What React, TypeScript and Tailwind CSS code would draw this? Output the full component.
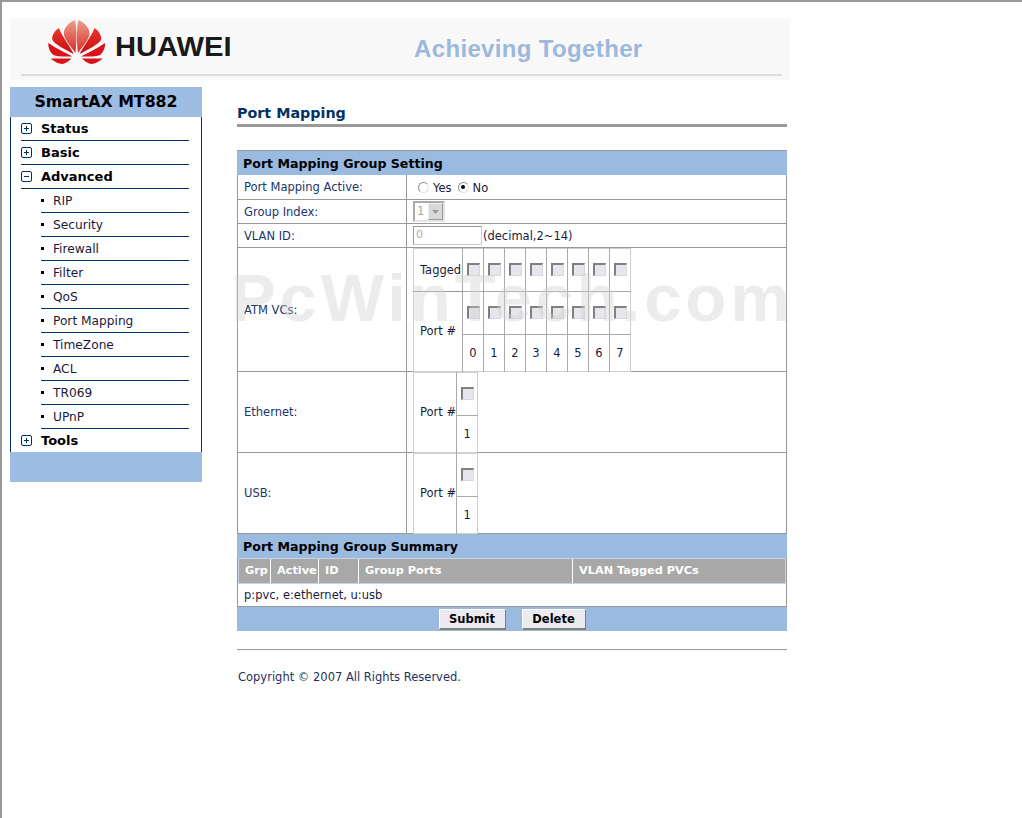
const nav = "font-['DejaVu_Sans',sans-serif]"

const subItems = ['RIP', 'Security', 'Firewall', 'Filter', 'QoS', 'Port Mapping', 'TimeZone', 'ACL', 'TR069', 'UPnP']
const ports = [0, 1, 2, 3, 4, 5, 6, 7]

function Petal({ d, fill }: { d: string; fill: string }) {
  return (
    <g fill={fill}>
      <path d={d} />
      <path d={d} transform="matrix(-1 0 0 1 73.4 0)" />
    </g>
  )
}

function Logo() {
  return (
    <svg viewBox="5 3 62 47" className="w-[62px] h-[47px] shrink-0">
      <defs>
        <linearGradient id="petalTop" x1="0" y1="0" x2="0" y2="1">
          <stop offset="0" stopColor="#e9a08e" />
          <stop offset="1" stopColor="#d92a22" />
        </linearGradient>
        <linearGradient id="petalMid" x1="0" y1="0" x2="0" y2="1">
          <stop offset="0" stopColor="#e8382c" />
          <stop offset="1" stopColor="#cc0a10" />
        </linearGradient>
      </defs>
      <Petal d="M38.5 5C44 7 50 13 49.5 19C49 25 42 32 38 38C37 30 36 14 38.5 5Z" fill="url(#petalTop)" />
      <Petal d="M54.5 13C59 16 62 21 61 25C59 29 49 34 39.6 39C43 32 51 22 54.5 13Z" fill="url(#petalMid)" />
      <Petal d="M65 28C65.5 32 63.5 37 60 40C56 42 48 41.500 41 41.500C48 38 58 33 65 28Z" fill="#d8131a" />
      <Petal d="M42 43.500L62.500 43.500C60 46 55 49 51 49C48 48.500 44 46 42 43.500Z" fill="#d8131a" />
    </svg>
  )
}

function Box({ kind }: { kind: 'plus' | 'minus' }) {
  return (
    <svg viewBox="0 0 11 11" className="w-[11px] h-[11px] shrink-0 text-[#003366]">
      <rect x="0.5" y="0.5" width="10" height="10" rx="1.500" fill="none" stroke="currentColor" />
      <path d="M3 5.500H8" stroke="currentColor" />
      {kind === 'plus' && <path d="M5.500 3V8" stroke="currentColor" />}
    </svg>
  )
}

function NavRow({ label, kind, last }: { label: string; kind: 'plus' | 'minus'; last?: boolean }) {
  return (
    <div className={`flex items-center gap-[9px] text-[13px] font-bold text-black ${last ? 'h-[23px]' : 'h-[24px] border-b border-[#003366]'}`}>
      <Box kind={kind} />
      <span>{label}</span>
    </div>
  )
}

function Sidebar() {
  return (
    <aside className="w-[192px] shrink-0">
      <div className="h-[30px] bg-[#9dbde3] flex items-center justify-center text-[15.8px] font-bold text-black">SmartAX MT882</div>
      <div className="border-x border-[#003366] pl-[10px] pr-[12px]">
        <NavRow label="Status" kind="plus" />
        <NavRow label="Basic" kind="plus" />
        <NavRow label="Advanced" kind="minus" />
        {subItems.map(item => (
          <div key={item} className="h-[24px] ml-[20px] flex items-center gap-[9px] border-b border-[#003366] text-[12.2px] text-[#1a1a3a]">
            <span className="w-[3px] h-[3px] bg-black shrink-0" />
            <span className="pt-[1px]">{item}</span>
          </div>
        ))}
        <NavRow label="Tools" kind="plus" last />
      </div>
      <div className="h-[30px] bg-[#9dbde3]" />
    </aside>
  )
}

function Check() {
  return <span className="inline-block align-middle w-[13px] h-[13px] bg-[#e6e6ec] border border-[#d8d8de] border-t-[#808080] border-l-[#808080] border-t-2 border-l-2" />
}

function Radio({ on }: { on?: boolean }) {
  return (
    <span className="inline-flex w-[11px] h-[11px] rounded-full border border-[#909090] border-r-[#e0e0e0] border-b-[#e0e0e0] bg-white items-center justify-center">
      {on && <span className="w-[4px] h-[4px] rounded-full bg-black" />}
    </span>
  )
}

function Band({ children }: { children: string }) {
  return <div className="h-[24px] bg-[#9abae0] flex items-center pl-[6px] pt-[2px] text-[12.6px] font-bold text-black">{children}</div>
}

function Row({ label, h, children }: { label: string; h: string; children: React.ReactNode }) {
  return (
    <div className={`flex border-b border-[#999] ${h}`}>
      <div className="w-[169px] shrink-0 border-r border-[#999] pl-[6px] pt-[2px] flex items-center text-[11.5px] text-[#20356a]">{label}</div>
      <div className="flex-1 pl-[6px] flex items-center text-[11.5px] text-[#1a1a3a]">{children}</div>
    </div>
  )
}

function AtmTable() {
  return (
    <table className="border-collapse table-fixed border border-[#cfcfcf] h-[123px] text-center text-[11.5px] text-[#1a1a3a]">
      <tbody>
        <tr className="h-[43px]">
          <td className="w-[49px] border-b border-[#999] pl-[6px] pt-[2px] text-left whitespace-nowrap">Tagged</td>
          {ports.map(p => <td key={p} className="w-[21px] border-l border-b border-[#aaa]"><Check /></td>)}
        </tr>
        <tr className="h-[43px]">
          <td rowSpan={2} className="pl-[6px] pt-[1px] text-left">Port #</td>
          {ports.map(p => <td key={p} className="border-l border-b border-[#aaa]"><Check /></td>)}
        </tr>
        <tr className="h-[37px]">
          {ports.map(p => <td key={p} className="border-l border-[#aaa] pt-[2px]">{p}</td>)}
        </tr>
      </tbody>
    </table>
  )
}

function PortTable() {
  return (
    <table className="border-collapse table-fixed border border-[#cfcfcf] h-[80px] text-center text-[11.5px] text-[#1a1a3a]">
      <tbody>
        <tr className="h-[43px]">
          <td rowSpan={2} className="w-[43px] pl-[6px] pt-[1px] text-left whitespace-nowrap">Port #</td>
          <td className="w-[21px] border-l border-b border-[#aaa]"><Check /></td>
        </tr>
        <tr className="h-[37px]">
          <td className="border-l border-[#aaa] pt-[2px]">1</td>
        </tr>
      </tbody>
    </table>
  )
}

const summaryCols = [
  { label: 'Grp', w: 'w-[32px]' },
  { label: 'Active', w: 'w-[48px]' },
  { label: 'ID', w: 'w-[40px]' },
  { label: 'Group Ports', w: 'w-[214px]' },
  { label: 'VLAN Tagged PVCs', w: 'flex-1' },
]

function PortMappingForm() {
  return (
    <section className="relative mt-[23px]">
      <div className="border-t border-[#999]">
        <Band>Port Mapping Group Setting</Band>
        <div className="border-x border-[#999] border-t-0">
          <Row label="Port Mapping Active:" h="h-[25px]">
            <span className="ml-[5px] flex items-center gap-[4px]">
              <Radio /><span className="mt-[3px]">Yes</span>
              <span className="ml-[2px] flex"><Radio on /></span><span className="mt-[3px]">No</span>
            </span>
          </Row>
          <Row label="Group Index:" h="h-[24px]">
            <span className="w-[32px] h-[21px] border-2 border-[#aaa] border-r-[#e4e4e4] border-b-[#e4e4e4] flex items-center text-[#a8a8a8] pl-[2px] justify-between">
              1
              <span className="w-[15px] h-[17px] bg-[#d9d9d9] border border-[#eee] border-r-[#999] border-b-[#999] flex items-center justify-center">
                <svg viewBox="0 0 7 4" className="w-[7px] h-[4px]"><path d="M0 0H7L3.500 4Z" fill="#999" /></svg>
              </span>
            </span>
          </Row>
          <Row label="VLAN ID:" h="h-[24px]">
            <span className="w-[69px] h-[19px] border border-[#ccc] border-t-[#999] border-l-[#999] pl-[2px] text-[#aaa] text-[11px] leading-[16px]">0</span>
            <span className="ml-[1px] mt-[3px]">(decimal,2~14)</span>
          </Row>
          <Row label="ATM VCs:" h="h-[124px]"><AtmTable /></Row>
          <Row label="Ethernet:" h="h-[81px]"><PortTable /></Row>
          <Row label="USB:" h="h-[81px]"><PortTable /></Row>
        </div>
        <Band>Port Mapping Group Summary</Band>
        <div className="border-x border-[#999]">
          <div className="flex h-[26px] border border-[#c8d4e4] bg-[#a8a8a8] text-white font-bold text-[11.3px]">
            {summaryCols.map((c, i) => (
              <div key={c.label} className={`${c.w} pl-[6px] flex items-center whitespace-nowrap overflow-hidden ${i < 4 ? 'border-r border-white' : ''}`}>{c.label}</div>
            ))}
          </div>
          <div className="h-[23px] border-b border-[#999] pl-[6px] pt-[1px] flex items-center text-[11.5px] text-[#1a1a3a]">p:pvc, e:ethernet, u:usb</div>
        </div>
        <div className="h-[24px] bg-[#9abae0] flex justify-center items-center gap-[16px]">
          <button className="w-[67px] h-[21px] pt-[1px] bg-[#eceaf0] border border-white border-r-[#808080] border-b-[#808080] border-b-2 text-[11.5px] font-bold text-black">Submit</button>
          <button className="w-[64px] h-[21px] pt-[1px] bg-[#eceaf0] border border-white border-r-[#808080] border-b-[#808080] border-b-2 text-[11.5px] font-bold text-black">Delete</button>
        </div>
      </div>
      {/* watermark */}
      <div className="absolute left-[-6px] top-[110px] pointer-events-none whitespace-nowrap font-['Liberation_Sans',sans-serif] font-bold text-[67px] leading-[76px] tracking-[3.9px] text-[#d0d0d0]/40">PcWinTech.com</div>
    </section>
  )
}

export default function App() {
  return (
    <div className={`${nav} min-h-[818px] border-t-2 border-l-2 border-[#999] bg-white pl-[8px] pt-[16px]`}>
      <header className="w-[780px] h-[62px] bg-[#f8f8f8] flex flex-col">
        <div className="h-[56px] flex items-start pl-[35px]">
          <Logo />
          <span className="ml-[8px] mt-[14px] font-['Liberation_Sans',sans-serif] font-bold text-[27px] leading-[30px] text-[#1a1a1a] [transform-origin:left] scale-x-[1.08]">HUAWEI</span>
          <span className="ml-[191px] mt-[16px] font-['Liberation_Sans',sans-serif] font-bold text-[24px] leading-[30px] tracking-[0.35px] text-[#9cb8dc] whitespace-nowrap">Achieving Together</span>
        </div>
        <div className="h-[2px] ml-[11px] mr-[8px] bg-[#dddddd]" />
      </header>
      <div className="flex mt-[7px]">
        <Sidebar />
        <main className="ml-[35px] w-[550px]">
          <h1 className="mt-[16px] h-[21px] flex items-center text-[14.3px] font-bold text-[#003366]">Port Mapping</h1>
          <div className="h-[3px] bg-[#999]" />
          <PortMappingForm />
          <div className="mt-[18px] border-t border-[#999]" />
          <p className="mt-[19px] ml-[1px] text-[11.5px] text-[#1f2f5f]">Copyright © 2007 All Rights Reserved.</p>
        </main>
      </div>
    </div>
  )
}
